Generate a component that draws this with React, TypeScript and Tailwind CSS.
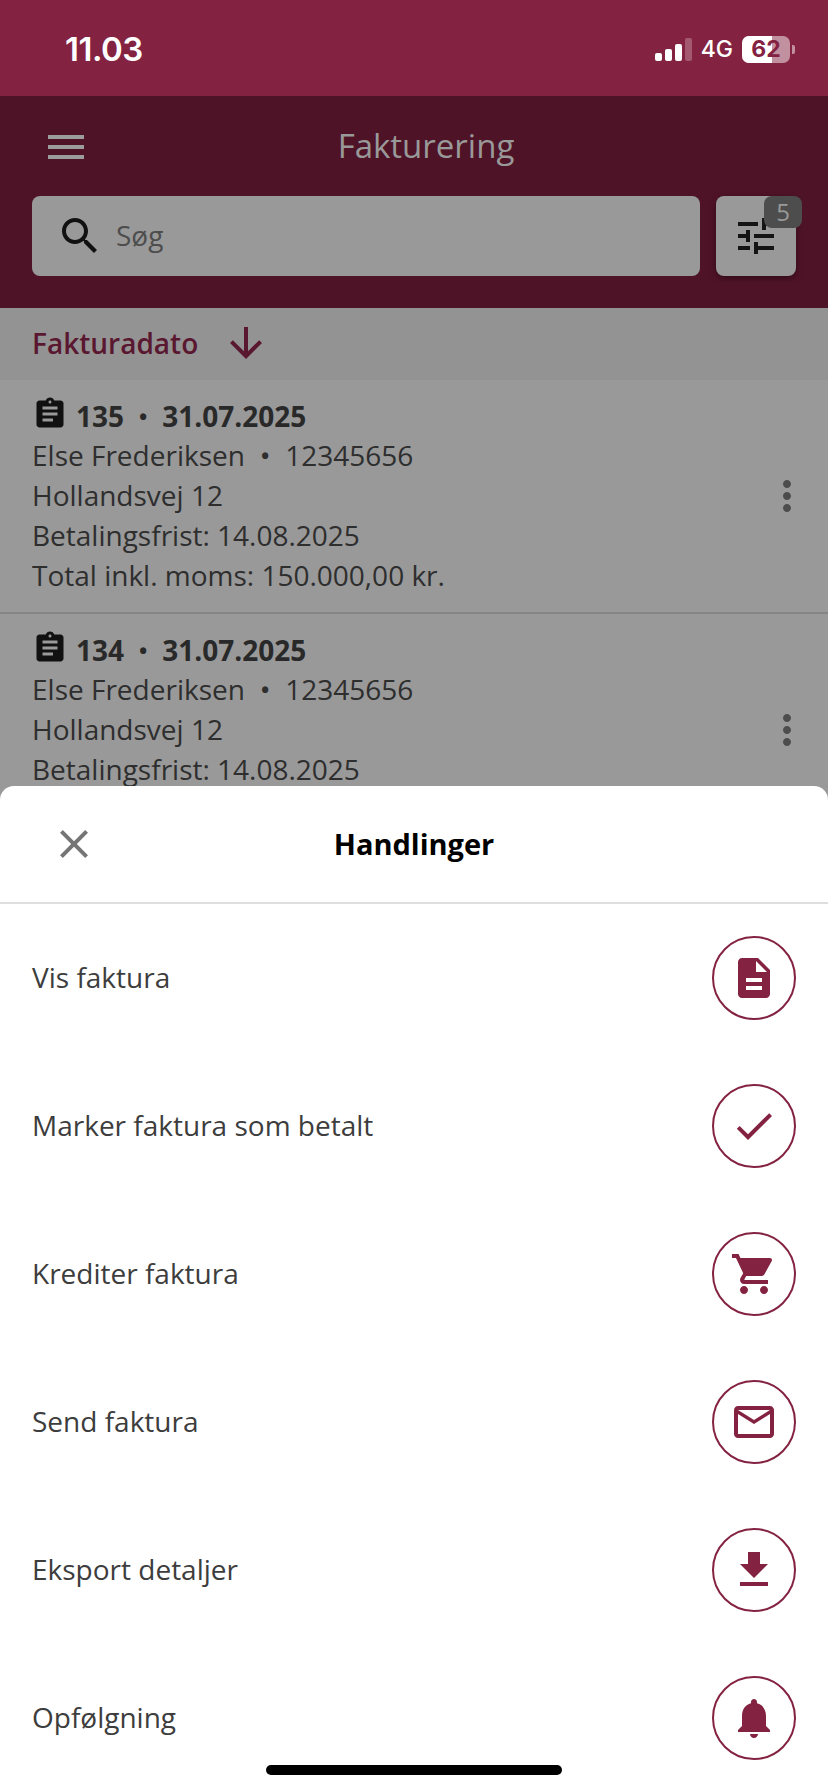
const MENU = "M3 18h18v-2H3v2zm0-5h18v-2H3v2zm0-7v2h18V6H3z";
const SEARCH = "M15.5 14h-.79l-.28-.27C15.41 12.59 16 11.11 16 9.5 16 5.91 13.09 3 9.5 3S3 5.91 3 9.5 5.91 16 9.5 16c1.61 0 3.09-.59 4.23-1.57l.27.28v.79l5 4.99L20.49 19l-4.99-5zm-6 0C7.01 14 5 11.99 5 9.5S7.01 5 9.5 5 14 7.01 14 9.5 11.99 14 9.5 14z";
const TUNE = "M3 17v2h6v-2H3zM3 5v2h10V5H3zm10 16v-2h8v-2h-8v-2h-2v6h2zM7 9v2H3v2h4v2h2V9H7zm14 4v-2H11v2h10zm-6-4h2V7h4V5h-4V3h-2v6z";
const ARROW = "M20 12l-1.41-1.41L13 16.17V4h-2v12.17l-5.58-5.59L4 12l8 8 8-8z";
const ASSIGN = "M19 3h-4.18C14.4 1.84 13.3 1 12 1c-1.3 0-2.4.84-2.82 2H5c-1.1 0-2 .9-2 2v14c0 1.1.9 2 2 2h14c1.1 0 2-.9 2-2V5c0-1.1-.9-2-2-2zm-7 0c.55 0 1 .45 1 1s-.45 1-1 1-1-.45-1-1 .45-1 1-1zm2 14H7v-2h7v2zm3-4H7v-2h10v2zm0-4H7V7h10v2z";
const MORE = "M12 8c1.1 0 2-.9 2-2s-.9-2-2-2-2 .9-2 2 .9 2 2 2zm0 2c-1.1 0-2 .9-2 2s.9 2 2 2 2-.9 2-2-.9-2-2-2zm0 6c-1.1 0-2 .9-2 2s.9 2 2 2 2-.9 2-2-.9-2-2-2z";
const CLOSE = "M19 6.41L17.59 5 12 10.59 6.41 5 5 6.41 10.59 12 5 17.59 6.41 19 12 13.41 17.59 19 19 17.59 13.41 12z";

const actions = [
  { label: "Vis faktura", icon: "M14 2H6c-1.1 0-1.99.9-1.99 2L4 20c0 1.1.89 2 1.99 2H18c1.1 0 2-.9 2-2V8l-6-6zm2 16H8v-2h8v2zm0-4H8v-2h8v2zm-3-5V3.5L18.5 9H13z" },
  { label: "Marker faktura som betalt", icon: "M9 16.17L4.83 12l-1.42 1.41L9 19 21 7l-1.41-1.41z" },
  { label: "Krediter faktura", icon: "M7 18c-1.1 0-1.99.9-1.99 2S5.9 22 7 22s2-.9 2-2-.9-2-2-2zM1 2v2h2l3.6 7.59-1.35 2.45c-.16.28-.25.61-.25.96 0 1.1.9 2 2 2h12v-2H7.42c-.14 0-.25-.11-.25-.25l.03-.12.9-1.63h7.45c.75 0 1.41-.41 1.75-1.03l3.58-6.49c.08-.14.12-.31.12-.48 0-.55-.45-1-1-1H5.21l-.94-2H1zm16 16c-1.1 0-1.99.9-1.99 2s.89 2 1.99 2 2-.9 2-2-.9-2-2-2z" },
  { label: "Send faktura", icon: "M20 4H4c-1.1 0-1.99.9-1.99 2L2 18c0 1.1.9 2 2 2h16c1.1 0 2-.9 2-2V6c0-1.1-.9-2-2-2zm0 14H4V8l8 5 8-5v10zm-8-7L4 6h16l-8 5z" },
  { label: "Eksport detaljer", icon: "M19 9h-4V3H9v6H5l7 7 7-7zM5 18v2h14v-2H5z" },
  { label: "Opfølgning", icon: "M12 22c1.1 0 2-.9 2-2h-4c0 1.1.89 2 2 2zm6-6v-5c0-3.07-1.64-5.64-4.5-6.32V4c0-.83-.67-1.5-1.5-1.5s-1.5.67-1.5 1.5v.68C7.63 5.36 6 7.92 6 11v5l-2 2v1h16v-1l-2-2z" },
];

// the second invoice's total is hidden behind the sheet
const invoices = [
  { no: "135", last: "Total inkl. moms: 150.000,00 kr." },
  { no: "134", last: "" },
];

function Icon({ d, className }: { d: string; className: string }) {
  return (
    <svg viewBox="0 0 24 24" fill="currentColor" className={className}>
      <path d={d} />
    </svg>
  );
}

function StatusBar() {
  return (
    <div className="h-[96px] bg-[#842341] flex items-center justify-between pl-[65px] pr-[33px] pt-[3px] shrink-0 text-white font-['Inter',sans-serif]">
      <span className="text-[33px] font-semibold tracking-[-0.5px] leading-none">11.03</span>
      <div className="flex items-center">
        <div className="flex items-end gap-[3px] h-[23px] mr-[9px]">
          <div className="w-[7px] h-[8px] rounded-[2px] bg-white" />
          <div className="w-[7px] h-[12px] rounded-[2px] bg-white" />
          <div className="w-[7px] h-[17px] rounded-[2px] bg-white" />
          <div className="w-[7px] h-[23px] rounded-[2px] bg-white/25" />
        </div>
        <span className="text-[23px] font-medium leading-none mr-[9px]">4G</span>
        <div className="relative w-[48px] h-[27px] rounded-[7px] bg-white/50 overflow-hidden flex items-center justify-center">
          <div className="absolute inset-y-0 left-0 w-[30px] bg-white" />
          <span className="relative text-[23px] font-bold leading-none text-[#842341]">62</span>
        </div>
        <div className="w-[3px] h-[9px] ml-[2px] rounded-r-[2px] bg-white/50" />
      </div>
    </div>
  );
}

function Header() {
  return (
    <div className="h-[212px] bg-[#4f1327] shrink-0 px-[32px] pt-[27px]">
      <div className="relative flex items-center justify-center h-[48px] mb-[25px] pl-[24px]">
        <Icon d={MENU} className="absolute left-[10px] top-0 w-[48px] h-[48px] text-[#9c9c9c]" />
        <span className="text-[33px] font-normal text-[#999999] leading-none mb-[4px]">Fakturering</span>
      </div>
      <div className="flex gap-[16px]">
        <div className="flex-1 h-[80px] rounded-[8px] bg-[#999999] flex items-center pl-[24px]">
          <Icon d={SEARCH} className="w-[48px] h-[48px] text-[#111111] mr-[12px]" />
          <span className="text-[28px] text-[#4d4d4d] leading-none mb-[2px]">Søg</span>
        </div>
        <div className="relative w-[80px] h-[80px] rounded-[8px] bg-[#999999] shadow-[0_2px_6px_rgba(0,0,0,0.4)] flex items-center justify-center">
          <Icon d={TUNE} className="w-[48px] h-[48px] text-[#141414]" />
          <div className="absolute top-0 right-[-6px] w-[38px] h-[32px] rounded-[8px] bg-[#4d4d4d] flex items-center justify-center text-[24px] text-[#999999] leading-none">5</div>
        </div>
      </div>
    </div>
  );
}

function InvoiceRow({ no, last }: { no: string; last: string }) {
  return (
    <div className="relative h-[234px] border-b-2 border-[#858585] px-[32px] pt-[16px] text-[28px] leading-[40px] text-[#2e2e2e]">
      <div className="flex items-center h-[40px] font-bold text-[#292929]">
        <Icon d={ASSIGN} className="w-[36px] h-[36px] text-[#111111] mr-[8px] mb-[5px]" />
        <span>{no}</span>
        <span className="mx-[15px] text-[22px]">•</span>
        <span>31.07.2025</span>
      </div>
      <div className="flex items-center h-[40px] mt-[-1px]">
        <span>Else Frederiksen</span>
        <span className="mx-[16px] text-[22px] font-bold">•</span>
        <span>12345656</span>
      </div>
      <div>Hollandsvej 12</div>
      <div>Betalingsfrist: 14.08.2025</div>
      {last && <div>{last}</div>}
      <Icon d={MORE} className="absolute right-[17px] top-[92px] w-[48px] h-[48px] text-[#4d4d4d]" />
    </div>
  );
}

function ActionSheet() {
  return (
    <div className="absolute inset-x-0 bottom-0 h-[1006px] bg-white rounded-t-[14px]">
      <div className="relative h-[118px] border-b-2 border-[#dedede] flex items-center justify-center">
        <Icon d={CLOSE} className="absolute left-[50px] top-[34px] w-[48px] h-[48px] text-[#757575]" />
        <span className="text-[29px] font-bold text-black leading-none mb-[2px]">Handlinger</span>
      </div>
      {actions.map((a) => (
        <div key={a.label} className="h-[148px] flex items-center justify-between pl-[32px] pr-[32px]">
          <span className="text-[28px] text-[#3d3d3d] leading-none mb-[2px]">{a.label}</span>
          <div className="w-[84px] h-[84px] rounded-full border-2 border-[#842341] flex items-center justify-center text-[#842341]">
            <Icon d={a.icon} className="w-[48px] h-[48px]" />
          </div>
        </div>
      ))}
    </div>
  );
}

export default function App() {
  return (
    <div className="relative w-[828px] h-[1792px] overflow-hidden flex flex-col bg-[#999999] font-['Open_Sans',sans-serif]">
      <StatusBar />
      <Header />
      <div className="h-[72px] bg-[#939393] shrink-0 flex items-center pl-[32px] pb-[2px]">
        <span className="text-[28px] font-semibold text-[#5a1730] leading-none">Fakturadato</span>
        <Icon d={ARROW} className="w-[48px] h-[48px] text-[#5a1730] ml-[24px]" />
      </div>
      <div>
        {invoices.map((i) => (
          <InvoiceRow key={i.no} no={i.no} last={i.last} />
        ))}
      </div>
      <ActionSheet />
      <div className="absolute bottom-[17px] left-[266px] w-[296px] h-[10px] rounded-full bg-black" />
    </div>
  );
}
